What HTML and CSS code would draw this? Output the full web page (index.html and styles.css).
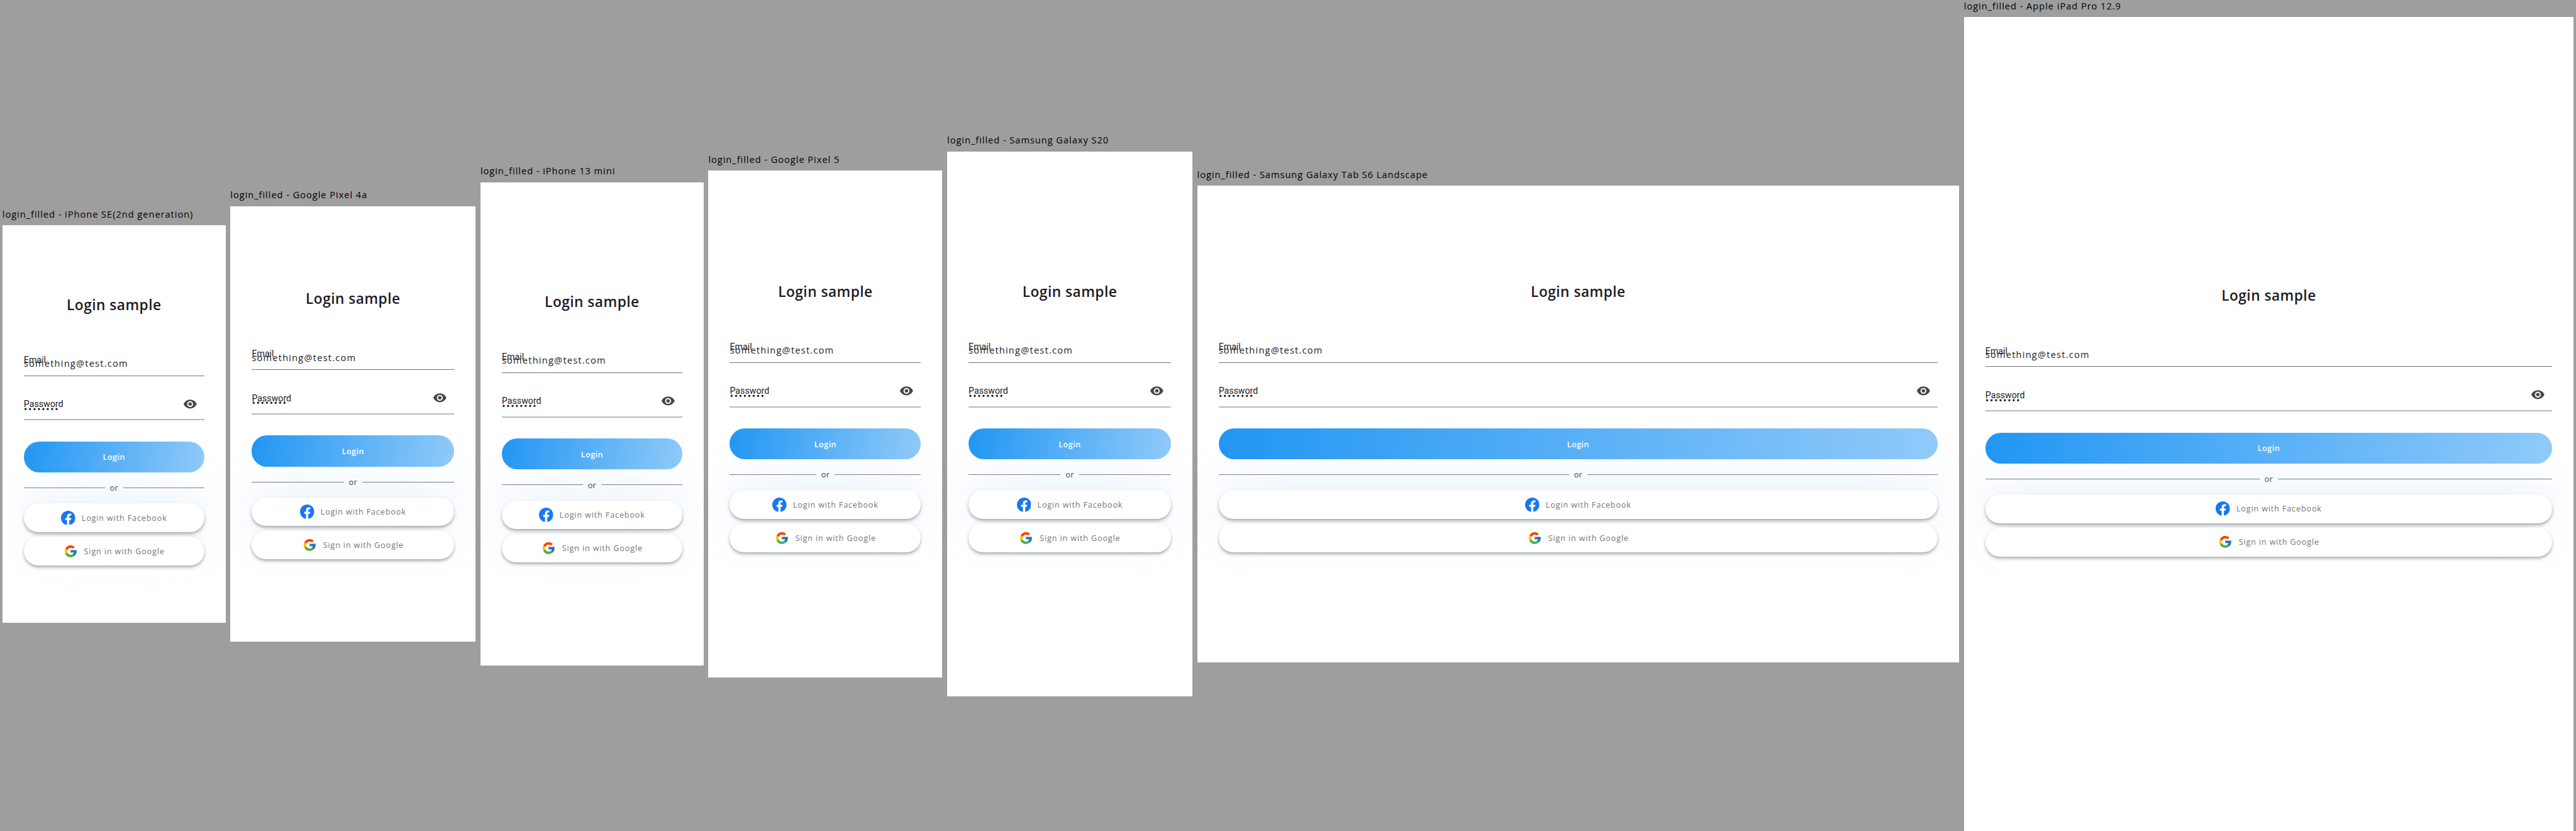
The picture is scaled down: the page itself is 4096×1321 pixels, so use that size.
FILE: index.html
```html
<!DOCTYPE html>
<html lang="en">
<head>
<meta charset="utf-8">
<title>login_filled</title>
<link rel="stylesheet" href="styles.css">
</head>
<body>
<svg class="sprite" aria-hidden="true">
  <symbol id="eye" viewBox="0 0 24 24"><path fill="#49454f" d="M12 4.5C7 4.5 2.73 7.61 1 12c1.73 4.39 6 7.5 11 7.5s9.27-3.11 11-7.5c-1.73-4.39-6-7.5-11-7.5zM12 17c-2.76 0-5-2.24-5-5s2.24-5 5-5 5 2.24 5 5-2.24 5-5 5zm0-8c-1.66 0-3 1.34-3 3s1.34 3 3 3 3-1.34 3-3-1.34-3-3-3z"/></symbol>
  <symbol id="facebook" viewBox="0 0 24 24"><path fill="#1877f2" d="M24 12.073c0-6.627-5.373-12-12-12s-12 5.373-12 12c0 5.99 4.388 10.954 10.125 11.854v-8.385H7.078v-3.47h3.047V9.43c0-3.007 1.792-4.669 4.533-4.669 1.312 0 2.686.235 2.686.235v2.953H15.83c-1.491 0-1.956.925-1.956 1.874v2.25h3.328l-.532 3.47h-2.796v8.385C19.612 23.027 24 18.062 24 12.073z"/></symbol>
  <symbol id="google" viewBox="0 0 48 48">
    <path fill="#ffc107" d="M43.611 20.083H42V20H24v8h11.303c-1.649 4.657-6.08 8-11.303 8-6.627 0-12-5.373-12-12s5.373-12 12-12c3.059 0 5.842 1.154 7.961 3.039l5.657-5.657C34.046 6.053 29.268 4 24 4 12.955 4 4 12.955 4 24s8.955 20 20 20 20-8.955 20-20c0-1.341-.138-2.65-.389-3.917z"/>
    <path fill="#ff3d00" d="M6.306 14.691l6.571 4.819C14.655 15.108 18.961 12 24 12c3.059 0 5.842 1.154 7.961 3.039l5.657-5.657C34.046 6.053 29.268 4 24 4 16.318 4 9.656 8.337 6.306 14.691z"/>
    <path fill="#4caf50" d="M24 44c5.166 0 9.86-1.977 13.409-5.192l-6.19-5.238A11.91 11.91 0 0 1 24 36c-5.202 0-9.619-3.317-11.283-7.946l-6.522 5.025C9.505 39.556 16.227 44 24 44z"/>
    <path fill="#1976d2" d="M43.611 20.083H42V20H24v8h11.303a12.04 12.04 0 0 1-4.087 5.571l6.193 5.238C36.971 39.205 44 34 44 24c0-1.341-.138-2.65-.389-3.917z"/>
  </symbol>
</svg>

<main class="board">
  <section class="device iphone-se">
    <h2 class="device-name">login_filled - iPhone SE(2nd generation)</h2>
    <div class="screen">
      <h1 class="title">Login sample</h1>
      <div class="field"><span class="label">Email</span><span class="value">something@test.com</span></div>
      <div class="field password"><span class="label">Password</span><span class="value">••••••••</span><svg class="eye"><use href="#eye"/></svg></div>
      <div class="login">Login</div>
      <div class="divider">or</div>
      <div class="social facebook"><svg class="logo"><use href="#facebook"/></svg>Login with Facebook</div>
      <div class="social google"><svg class="logo"><use href="#google"/></svg>Sign in with Google</div>
    </div>
  </section>

  <section class="device pixel-4a">
    <h2 class="device-name">login_filled - Google Pixel 4a</h2>
    <div class="screen">
      <h1 class="title">Login sample</h1>
      <div class="field"><span class="label">Email</span><span class="value">something@test.com</span></div>
      <div class="field password"><span class="label">Password</span><span class="value">••••••••</span><svg class="eye"><use href="#eye"/></svg></div>
      <div class="login">Login</div>
      <div class="divider">or</div>
      <div class="social facebook"><svg class="logo"><use href="#facebook"/></svg>Login with Facebook</div>
      <div class="social google"><svg class="logo"><use href="#google"/></svg>Sign in with Google</div>
    </div>
  </section>

  <section class="device iphone-13-mini">
    <h2 class="device-name">login_filled - iPhone 13 mini</h2>
    <div class="screen">
      <h1 class="title">Login sample</h1>
      <div class="field"><span class="label">Email</span><span class="value">something@test.com</span></div>
      <div class="field password"><span class="label">Password</span><span class="value">••••••••</span><svg class="eye"><use href="#eye"/></svg></div>
      <div class="login">Login</div>
      <div class="divider">or</div>
      <div class="social facebook"><svg class="logo"><use href="#facebook"/></svg>Login with Facebook</div>
      <div class="social google"><svg class="logo"><use href="#google"/></svg>Sign in with Google</div>
    </div>
  </section>

  <section class="device pixel-5">
    <h2 class="device-name">login_filled - Google Pixel 5</h2>
    <div class="screen">
      <h1 class="title">Login sample</h1>
      <div class="field"><span class="label">Email</span><span class="value">something@test.com</span></div>
      <div class="field password"><span class="label">Password</span><span class="value">••••••••</span><svg class="eye"><use href="#eye"/></svg></div>
      <div class="login">Login</div>
      <div class="divider">or</div>
      <div class="social facebook"><svg class="logo"><use href="#facebook"/></svg>Login with Facebook</div>
      <div class="social google"><svg class="logo"><use href="#google"/></svg>Sign in with Google</div>
    </div>
  </section>

  <section class="device galaxy-s20">
    <h2 class="device-name">login_filled - Samsung Galaxy S20</h2>
    <div class="screen">
      <h1 class="title">Login sample</h1>
      <div class="field"><span class="label">Email</span><span class="value">something@test.com</span></div>
      <div class="field password"><span class="label">Password</span><span class="value">••••••••</span><svg class="eye"><use href="#eye"/></svg></div>
      <div class="login">Login</div>
      <div class="divider">or</div>
      <div class="social facebook"><svg class="logo"><use href="#facebook"/></svg>Login with Facebook</div>
      <div class="social google"><svg class="logo"><use href="#google"/></svg>Sign in with Google</div>
    </div>
  </section>

  <section class="device galaxy-tab-s6">
    <h2 class="device-name">login_filled - Samsung Galaxy Tab S6 Landscape</h2>
    <div class="screen">
      <h1 class="title">Login sample</h1>
      <div class="field"><span class="label">Email</span><span class="value">something@test.com</span></div>
      <div class="field password"><span class="label">Password</span><span class="value">••••••••</span><svg class="eye"><use href="#eye"/></svg></div>
      <div class="login">Login</div>
      <div class="divider">or</div>
      <div class="social facebook"><svg class="logo"><use href="#facebook"/></svg>Login with Facebook</div>
      <div class="social google"><svg class="logo"><use href="#google"/></svg>Sign in with Google</div>
    </div>
  </section>

  <section class="device ipad-pro">
    <h2 class="device-name">login_filled - Apple iPad Pro 12.9</h2>
    <div class="screen">
      <h1 class="title">Login sample</h1>
      <div class="field"><span class="label">Email</span><span class="value">something@test.com</span></div>
      <div class="field password"><span class="label">Password</span><span class="value">••••••••</span><svg class="eye"><use href="#eye"/></svg></div>
      <div class="login">Login</div>
      <div class="divider">or</div>
      <div class="social facebook"><svg class="logo"><use href="#facebook"/></svg>Login with Facebook</div>
      <div class="social google"><svg class="logo"><use href="#google"/></svg>Sign in with Google</div>
    </div>
  </section>
</main>
</body>
</html>
```
FILE: styles.css
```css
* { box-sizing: border-box; }

html, body {
  margin: 0;
  height: 100%;
  overflow: hidden;
  background: #9e9e9e;
}

.sprite { display: none; }

/* The board is laid out at 4327px wide and scaled down as a whole */
.board {
  zoom: 0.94662;
  display: flex;
  align-items: center;
  gap: 8px;
  width: 4327px;
  height: 1395px;
  padding: 4px 4px 0;
  overflow: hidden;
  font-family: "Open Sans", "Noto Sans", sans-serif;
  color: #1c1b1f;
}

.device { flex: none; width: var(--w); }

.device-name {
  margin: 0;
  height: 25px;
  font-size: 15.5px;
  font-weight: 400;
  line-height: 11.6px;
  letter-spacing: 1px;
  white-space: nowrap;
  color: #000;
}

.screen {
  display: flex;
  flex-direction: column;
  height: var(--h);
  padding: var(--top) 36px 0;
  background: #fff;
  overflow: hidden;
}

.iphone-se      { --w: 375px;  --h: 667px;  --top: 117.5px; --slope: 99.7deg; }
.pixel-4a       { --w: 412px;  --h: 732px;  --top: 140px;   --slope: 98.7deg; }
.iphone-13-mini { --w: 375px;  --h: 812px;  --top: 185px;   --slope: 99.7deg; }
.pixel-5        { --w: 393px;  --h: 851px;  --top: 187.5px; --slope: 99.2deg; }
.galaxy-s20     { --w: 412px;  --h: 915px;  --top: 219.5px; --slope: 98.7deg; }
.galaxy-tab-s6  { --w: 1280px; --h: 800px;  --top: 162px;   --slope: 92.5deg; }
.ipad-pro       { --w: 1024px; --h: 1366px; --top: 452px;   --slope: 93.1deg; }

.title {
  flex: none;
  margin: 0 0 55.3px;
  font-size: 24px;
  font-weight: 600;
  line-height: 32px;
  letter-spacing: 0.5px;
  text-align: center;
}

.field {
  position: relative;
  flex: none;
  height: 48px;
  padding-top: 17px;
  border-bottom: 1.1px solid #79747e;
}

.field.password {
  height: 48.5px;
  margin: 26.3px 0 35.4px;
  padding-top: 19.3px;
  border-bottom: 2.2px solid #bbb9bf;
}

.label {
  position: absolute;
  top: 12.3px;
  left: 0;
  font-family: Roboto, sans-serif;
  font-size: 15px;
  line-height: 18px;
}

.value {
  display: block;
  font-size: 15.5px;
  line-height: 20px;
  letter-spacing: 1.25px;
}

.password .value {
  font-size: 16px;
  letter-spacing: 1.4px;
}

.eye {
  position: absolute;
  top: 8.5px;
  right: 12px;
  width: 24px;
  height: 24px;
}

.login {
  display: flex;
  flex: none;
  align-items: center;
  justify-content: center;
  height: 52px;
  padding-top: 1px;
  border-radius: 26px;
  background: linear-gradient(var(--slope), #2196f3, #90caf9);
  box-shadow: 0 100px 90px rgba(100, 170, 225, 0.2);
  font-size: 13.3px;
  font-weight: 600;
  letter-spacing: 0.5px;
  color: #fff;
}

.divider {
  display: flex;
  flex: none;
  align-items: center;
  gap: 8.5px;
  height: 20px;
  margin: 16px 0;
  font-size: 13.5px;
  line-height: 20px;
  letter-spacing: 0.3px;
  color: #49454f;
}

.divider::before,
.divider::after {
  content: "";
  flex: 1;
  height: 1.1px;
  background: #7b7e82;
}

.social {
  display: flex;
  flex: none;
  align-items: center;
  justify-content: center;
  gap: 10.7px;
  height: 48px;
  border-radius: 24px;
  background: #fff;
  box-shadow:
    0 2px 4px -1px rgba(0, 0, 0, 0.22),
    0 4px 6px rgba(0, 0, 0, 0.18),
    0 1px 10px rgba(0, 0, 0, 0.04);
  font-size: 13.3px;
  letter-spacing: 0.91px;
  color: #757575;
}

.social.google { margin-top: 8px; }

.logo { width: 24px; height: 24px; }
```
